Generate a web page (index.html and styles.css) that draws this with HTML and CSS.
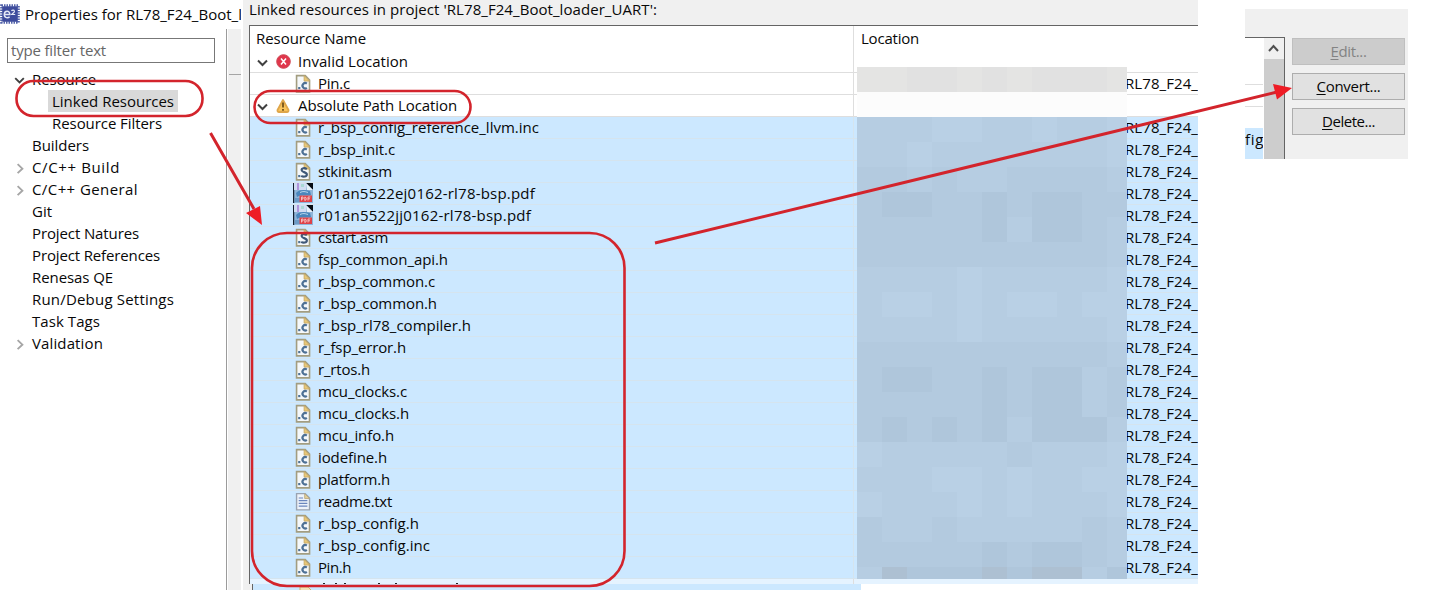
FILE: index.html
```
<!DOCTYPE html>
<html lang="en">
<head>
<meta charset="utf-8">
<title>Properties</title>
<link rel="stylesheet" href="styles.css">
</head>
<body>
<svg class="defs" width="0" height="0">
  <defs>
    <symbol id="c" viewBox="1.200 .5 18.500 18.500"><path d="M4.500 2.500h8l4 4v11h-12z" fill="#f5f8fa" stroke="#a39d80" stroke-width="1.500"/><path d="M11.500 2.500v5h5z" fill="#e8c878" stroke="#c8a860" stroke-width=".8"/><path d="M14 9.800a2.500 2.500 0 1 0 0 4" fill="none" stroke="#4e7195" stroke-width="2"/><rect x="6" y="13" width="2" height="2" fill="#4e7195"/></symbol>
    <symbol id="s" viewBox="1.200 .5 18.500 18.500"><path d="M4.500 2.500h8l4 4v11h-12z" fill="#f5f8fa" stroke="#a39d80" stroke-width="1.500"/><path d="M11.500 2.500v5h5z" fill="#e8c878" stroke="#c8a860" stroke-width=".8"/><path d="M14 7.500C12 6 9 6.500 9.200 8.600c.2 2 4.800 1.500 4.800 3.900 0 2.200-3.300 2.500-5.200 1.200" fill="none" stroke="#3f5878" stroke-width="2"/><rect x="6" y="13" width="2" height="2" fill="#4e7195"/></symbol>
    <symbol id="t" viewBox="1.200 .5 18.500 18.500"><path d="M4.500 2.500h8l4 4v11h-12z" fill="#eef3fa" stroke="#9aa3b0" stroke-width="1.300"/><path d="M12 2.500v4.500h4.500z" fill="#e3cf98" stroke="#b8a880" stroke-width=".8"/><path d="M6.500 6.500h4M6.500 9h8M6.500 11.500h8M6.500 14h8" stroke="#6b86bd" stroke-width="1.100"/></symbol>
    <symbol id="p" viewBox="0 0 20 20"><path d="M0 0h20v20H0z" fill="#8fb5d8"/><path d="M0 0h1.200v20H0z" fill="#111c2c"/><path d="M1 0h12v7H1z" fill="#d0dcf2"/><path d="M4 0h2v7H4z" fill="#b095dc"/><path d="M8 1h3v3H8z" fill="#a9d8d5"/><path d="M13 0h7v7z" fill="#080d14"/><path d="M13 0l7 7h-6z" fill="#e7f0f8"/><path d="M3 10c4-4 9-3 14-2l1 4c-5 1-9-1-14 2z" fill="#4a87bd"/><path d="M7 9.500c3-1.500 5-1 8 0" fill="none" stroke="#b7d6ec"/><path d="M2 15h5v4H2z" fill="#6c9bc6"/><rect x="6.500" y="12.500" width="12.500" height="6.500" fill="#df4247"/><path d="M8.500 17.500v-3.500h1.500v2H8.500M11.800 14v3.500c2 0 2-3.500 0-3.500M15 17.500v-3.500h2.300M15 15.800h2" fill="none" stroke="#f6caca" stroke-width=".9"/></symbol>
  </defs>
</svg>

<main class="page">
  <aside class="sidebar">
    <header class="titlebar">
      <svg class="appicon" width="20" height="20" viewBox="0 0 20 20"><rect x="1.500" y="1.500" width="17" height="17" fill="none" stroke="#5363aa" stroke-width="2.600" stroke-dasharray="1.500 1"/><rect x="2.200" y="2.200" width="15.600" height="15.600" rx="1" fill="#3d4b9c"/><path d="M4.500 10.500h5.300c0-4.500-5.500-4-5.500 0 0 3.800 3.800 3.800 5.300 2.300" fill="none" stroke="#e4e8f5" stroke-width="1.500"/><path d="M11.500 7c.8-1.500 3.500-1 2.800.8L11.700 10.500h3.500" fill="none" stroke="#e4e8f5" stroke-width="1.200"/></svg>
      <span class="fit" data-w="217">Properties for RL78_F24_Boot_l</span>
    </header>
    <div class="sidebody">
      <nav class="tree">
        <div class="filter"><span class="fit" data-w="95">type filter text</span></div>
        <div id="nav"></div>
      </nav>
      <div class="gutter"><div class="gutterline"></div></div>
    </div>
  </aside>

  <section class="linked">
    <div class="caption"><span class="fit" data-w="408">Linked resources in project 'RL78_F24_Boot_loader_UART':</span></div>
    <div class="table">
      <div class="head"><div class="name"><span class="fit" data-w="110">Resource Name</span></div><div class="loc"><span class="fit" data-w="58">Location</span></div></div>
      <div id="rows"></div>
      <div class="row partial"><div class="name"><svg width="142" height="5"><path d="M5 4.500h2M17 4.500h2M26 4.500h2M60 4.500h2M77 4.500h2M138 4.500h2" stroke="#222"/></svg></div><div class="loc"></div></div>
      <div class="mosaic" id="mosaic"></div>
    </div>
    <div class="seam"><svg width="20" height="6"><path d="M4 6V3h8l3 3" fill="#f2e3b8" stroke="#d1b36b"/></svg></div>
  </section>

  <section class="actions">
    <div class="peek">
      <div class="cells"><div class="blank"></div><div class="blank line"></div><div class="blank line second"></div><div class="hit"><span class="fit" data-w="19">fig</span></div></div>
      <div class="scroll"><svg width="19" height="21"><path d="M5 13l4.500-5 4.500 5" fill="none" stroke="#505050" stroke-width="2"/></svg><div class="thumb"></div></div>
    </div>
    <div class="buttons">
      <div class="btn off"><span class="fit" data-w="36"><u>E</u>dit...</span></div>
      <div class="btn"><span class="fit" data-w="64"><u>C</u>onvert...</span></div>
      <div class="btn"><span class="fit" data-w="53"><u>D</u>elete...</span></div>
    </div>
  </section>
</main>

<svg class="marks" width="1430" height="590" viewBox="0 0 1430 590">
  <g fill="none" stroke="#d3242c" stroke-width="2.600">
    <rect x="16.500" y="81" width="186" height="35" rx="17"/>
    <rect x="254.500" y="91" width="216" height="32" rx="16"/>
    <rect x="252" y="233" width="372.500" height="353" rx="35"/>
    <path d="M210.500 133L254 209M655 243L1277 92" stroke-width="3"/>
  </g>
  <path d="M262 225l-16-12 14-7zM1292 88l-19-4 4 15.500z" fill="#ee1c25"/>
</svg>
<script src="app.js"></script>
</body>
</html>
```
FILE: styles.css
```
* { box-sizing: border-box; }
body { margin: 0; width: 1430px; height: 590px; overflow: hidden; background: #fff; color: #080808; font: 15px/22px "Open Sans", "Noto Sans", sans-serif; white-space: nowrap; }
.defs { position: absolute; }
.page { display: flex; height: 590px; align-items: flex-start; }
.fit { display: inline-block; white-space: pre; }

.sidebar { width: 241px; height: 590px; overflow: hidden; display: flex; flex-direction: column; flex: none; }
.titlebar { height: 29px; display: flex; padding-top: 4px; gap: 5px; flex: none; }
.titlebar .fit { line-height: 20px; }
.appicon { flex: none; }
.sidebody { display: flex; flex: 1; }
.tree { width: 227px; border-right: 1px solid #9b9b9b; padding-top: 9px; }
.filter { width: 208px; height: 25px; margin: 0 0 5px 7px; border: 1px solid #777; padding-left: 3px; color: #666; }
.gutter { flex: 1; margin-left: 1px; background: #f0f0f0; padding-top: 45px; }
.gutterline { height: 1px; margin-left: 1px; background: #a5a5a5; }
.item { height: 22px; display: flex; align-items: center; padding-left: 12px; }
.arrow { width: 16px; height: 22px; flex: none; }
.item .arrow { padding-top: 1px; }
.label { padding: 0 4px; height: 22px; }
.child { padding-left: 48px; }
.child .arrow { display: none; }
.selected .label { background: #d9d9d9; }

.linked { width: 955px; margin-left: 2px; background: #f0f0f0; flex: none; height: 590px; }
.caption { height: 25px; padding: 0 0 0 6px; line-height: 18px; }
.table { position: relative; margin-left: 6px; height: 559px; border: solid #646464; border-width: 1px 0 0 1px; background: #fff; overflow: hidden; }
.head, .row { display: flex; height: 22px; }
.head { height: 25px; line-height: 24px; }
.name { width: 604px; border-right: 1px solid #dedede; padding-left: 6px; display: flex; flex: none; }
.loc { flex: 1; padding-left: 7px; overflow: hidden; }
.row .name, .row .loc { border-bottom: 1px solid #dedede; }
.row .loc { padding-left: 271px; display: flex; }
.row .arrow { margin-left: -1px; }
.row svg { flex: none; }
.row .name svg + svg { margin: 0 5px 0 2px; }
.row .fit { line-height: 21px; }
.file .name { padding-left: 43px; }
.file .name svg { margin: 0 5px 0 0; }
.blue { background: #cce8ff; }
.blue .name, .blue .loc { border-color: #d5e4ee; }
.partial { background: #e5f3ff; }
.partial .name { padding-left: 68px; }
.mosaic { position: absolute; left: 607px; top: 41px; width: 270px; height: 512px; overflow: hidden; display: grid; grid-template-columns: repeat(11, 25px); grid-auto-rows: 25px; }
.n0 { background: #b9d0e5; } .n1 { background: #b6cde2; } .n2 { background: #b3cadf; } .n3 { background: #afc6db; } .n4 { background: #adc0d2; }
.g { background: #e4e4e3; } .h { background: #e1e1e1; } .w { background: #fcfcfc; }
.seam { height: 6px; width: 955px; background: linear-gradient(90deg, #f0f0f0 9px, #646464 9px 10px, #cce8ff 10px 618px, #fff 618px); padding-left: 53px; }
.seam svg { display: block; }

.actions { width: 163px; height: 150px; margin: 9px 0 0 47px; background: #f0f0f0; display: flex; gap: 7px; padding-top: 28px; flex: none; }
.peek { width: 40px; border: solid #646464; border-width: 1px 1px 0 0; display: flex; background: #fff; }
.cells { width: 18px; margin-right: 1px; overflow: hidden; }
.blank { height: 46px; }
.line { height: 22px; border-top: 1px solid #dedede; }
.hit { height: 32px; background: #cce8ff; line-height: 22px; }
.scroll { width: 20px; background: #f0f0f0; flex: none; }
.scroll svg { display: block; }
.thumb { height: 100px; background: #cdcdcd; }
.buttons { display: flex; flex-direction: column; gap: 8px; padding-top: 1px; }
.btn { width: 113px; height: 27px; border: 1px solid #adadad; background: #e1e1e1; display: flex; justify-content: center; line-height: 25px; }
.off { background: #ccc; border-color: #bfbfbf; color: #838383; }
u { text-underline-offset: 2px; text-decoration-thickness: 1px; }
.marks { position: absolute; left: 0; top: 0; }
```
FILE: app.js
```
const open = '<svg class="arrow" viewBox="0 0 16 22"><path d="M3 9.500l4.500 4.500 4.500-4.500" fill="none" stroke="#404040" stroke-width="2"/></svg>';
const closed = '<svg class="arrow" viewBox="0 0 16 22"><path d="M5.500 7.500l5 4.700-5 4.700" fill="none" stroke="#a6a6a6" stroke-width="2"/></svg>';
const none = '<span class="arrow"></span>';
const text = (t, w) => `<span class="fit" data-w="${w}">${t}</span>`;

const nav = [
  ['Resource', 64, open], ['Linked Resources', 122, none, 'child selected'], ['Resource Filters', 110, none, 'child'],
  ['Builders', 57, none], ['C/C++ Build', 88, closed], ['C/C++ General', 106, closed], ['Git', 20, none],
  ['Project Natures', 107, none], ['Project References', 128, none], ['Renesas QE', 81, none],
  ['Run/Debug Settings', 142, none], ['Task Tags', 68, none], ['Validation', 71, closed]
];
document.getElementById('nav').innerHTML = nav.map(([t, w, a, c]) =>
  `<div class="item ${c || ''}">${a}<span class="label">${text(t, w)}</span></div>`).join('');

const bad = '<svg width="20" height="22" viewBox="0 0 20 22"><circle cx="10.500" cy="10.500" r="6.800" fill="#e0364b" stroke="#cf4653"/><path d="M8 7.500l5 6M13 7.500l-5 6" stroke="#fff" stroke-width="1.500"/></svg>';
const warn = '<svg width="20" height="22" viewBox="0 0 20 22"><path d="M10 5L15.500 15q.3 2-1.500 2H6q-1.800 0-1.500-2z" fill="#f9c45b" stroke="#dfa64a" stroke-linejoin="round" stroke-width="1.800"/><path d="M10 7.500v5M10 14v1.700" stroke="#6c4a16" stroke-width="1.700"/></svg>';
const group = (icon, t, w) => `<div class="row"><div class="name">${open}${icon}${text(t, w)}</div><div class="loc"></div></div>`;
const file = (i, t, w, c) => `<div class="row file ${c}"><div class="name"><svg width="20" height="21"><use href="#${i}" width="20" height="${i === 'p' ? 20 : 21}"/></svg>${text(t, w)}</div><div class="loc">${text('RL78_F24_', 73)}</div></div>`;
const files = [
  ['c', 'r_bsp_config_reference_llvm.inc', 221], ['c', 'r_bsp_init.c', 77], ['s', 'stkinit.asm', 74],
  ['p', 'r01an5522ej0162-rl78-bsp.pdf', 217], ['p', 'r01an5522jj0162-rl78-bsp.pdf', 213], ['s', 'cstart.asm', 70],
  ['c', 'fsp_common_api.h', 130], ['c', 'r_bsp_common.c', 117], ['c', 'r_bsp_common.h', 119], ['c', 'r_bsp_rl78_compiler.h', 153],
  ['c', 'r_fsp_error.h', 88], ['c', 'r_rtos.h', 52], ['c', 'mcu_clocks.c', 89], ['c', 'mcu_clocks.h', 91], ['c', 'mcu_info.h', 76],
  ['c', 'iodefine.h', 69], ['c', 'platform.h', 72], ['t', 'readme.txt', 74], ['c', 'r_bsp_config.h', 101], ['c', 'r_bsp_config.inc', 112], ['c', 'Pin.h', 33]
];
document.getElementById('rows').innerHTML = group(bad, 'Invalid Location', 110) + file('c', 'Pin.c', 32, '') +
  group(warn, 'Absolute Path Location', 159) + files.map(f => file(...f, 'blue')).join('');

const shade = ['gghhghghhhg', 'wwwwwwwwwww', '11100110110', '11011111110', '22121122221', '23322323322', '22222313321',
  '22222222221', '11110111110', '10010100100', '11110111110', '22222222221', '23322323312', '22222323312', '23232313331',
  '01111121110', '11100101100', '01110101110', '21121111121', '22222323321', '14333434413'];
document.getElementById('mosaic').innerHTML = shade.flatMap(r => [...r]).map(k => `<i class="${/\d/.test(k) ? 'n' + k : k}"></i>`).join('');

document.querySelectorAll('.fit').forEach(e => {
  const n = e.textContent.length;
  e.style.letterSpacing = (e.dataset.w - e.getBoundingClientRect().width) / n + 'px';
});
```
